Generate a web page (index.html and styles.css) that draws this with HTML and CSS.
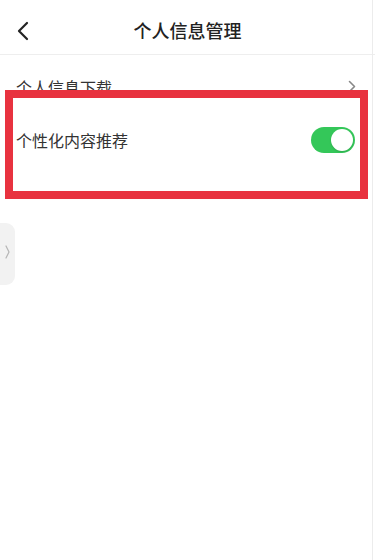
FILE: index.html
```html
<!DOCTYPE html>
<html lang="zh-CN">
<head>
<meta charset="utf-8">
<title>个人信息管理</title>
<link rel="stylesheet" href="styles.css">
</head>
<body>
<div class="page">
  <header class="nav">
    <span class="back">
      <svg width="14" height="20" viewBox="0 0 14 20"><path d="M11 2 L3 10 L11 18" fill="none" stroke="#222" stroke-width="2.2" stroke-linecap="round" stroke-linejoin="round"/></svg>
    </span>
    <h1 class="title">个人信息管理</h1>
  </header>
  <div class="list">
    <div class="row">
      <span class="label">个人信息下载</span>
      <svg class="arrow" width="8" height="13" viewBox="0 0 8 13"><path d="M1.5 1.5 L6.5 6.5 L1.5 11.5" fill="none" stroke="#888" stroke-width="1.6" stroke-linecap="round" stroke-linejoin="round"/></svg>
    </div>
    <div class="row">
      <span class="label">个性化内容推荐</span>
      <span class="switch"><span class="knob"></span></span>
    </div>
  </div>
  <div class="side-tab">
    <svg width="5" height="14" viewBox="0 0 5 14"><path d="M1 1 L4 7 L1 13" fill="none" stroke="#b5b5b5" stroke-width="1.2" stroke-linecap="round" stroke-linejoin="round"/></svg>
  </div>
  <div class="highlight"></div>
  <div class="edge"></div>
</div>
</body>
</html>
```

FILE: styles.css
```css
* { box-sizing: border-box; }
html, body {
  margin: 0;
  padding: 0;
  background: #fff;
}
body {
  font-family: "Noto Sans CJK SC", "Noto Sans", sans-serif;
  color: #222;
}
.page {
  position: relative;
  width: 375px;
  height: 560px;
  overflow: hidden;
  background: #fff;
}
.nav {
  height: 55px;
  display: flex;
  align-items: center;
  justify-content: center;
  position: relative;
  border-bottom: 1px solid #eeeeee;
}
.back {
  position: absolute;
  left: 16px;
  top: 21px;
  width: 14px;
  height: 20px;
  display: flex;
}
.title {
  margin: 0;
  font-size: 18px;
  font-weight: 500;
  color: #222;
  line-height: 1;
  margin-top: 6px;
}
.list {
  padding-top: 5px;
}
.row {
  height: 53px;
  display: flex;
  align-items: center;
  justify-content: space-between;
  padding: 0 20px 0 16px;
}
.label {
  font-size: 16px;
  color: #333;
  line-height: 1;
}
.arrow {
  display: block;
  margin-right: -1px;
}
.switch {
  width: 44px;
  height: 26px;
  border-radius: 13px;
  background: #34c759;
  display: flex;
  align-items: center;
  justify-content: flex-end;
  padding: 2px;
}
.knob {
  width: 22px;
  height: 22px;
  border-radius: 50%;
  background: #fff;
  box-shadow: 0 1px 2px rgba(0,0,0,0.15);
}
.side-tab {
  position: absolute;
  left: 0;
  top: 223px;
  width: 15px;
  height: 62px;
  background: #f2f2f2;
  border-radius: 0 9px 9px 0;
  display: flex;
  align-items: center;
  justify-content: center;
  padding-bottom: 4px;
}
.highlight {
  position: absolute;
  left: 5px;
  top: 90px;
  width: 363px;
  height: 109px;
  border: 8px solid #e8323f;
}
.edge {
  position: absolute;
  right: 2px;
  top: 0;
  width: 1px;
  height: 560px;
  background: #ececec;
}
```
